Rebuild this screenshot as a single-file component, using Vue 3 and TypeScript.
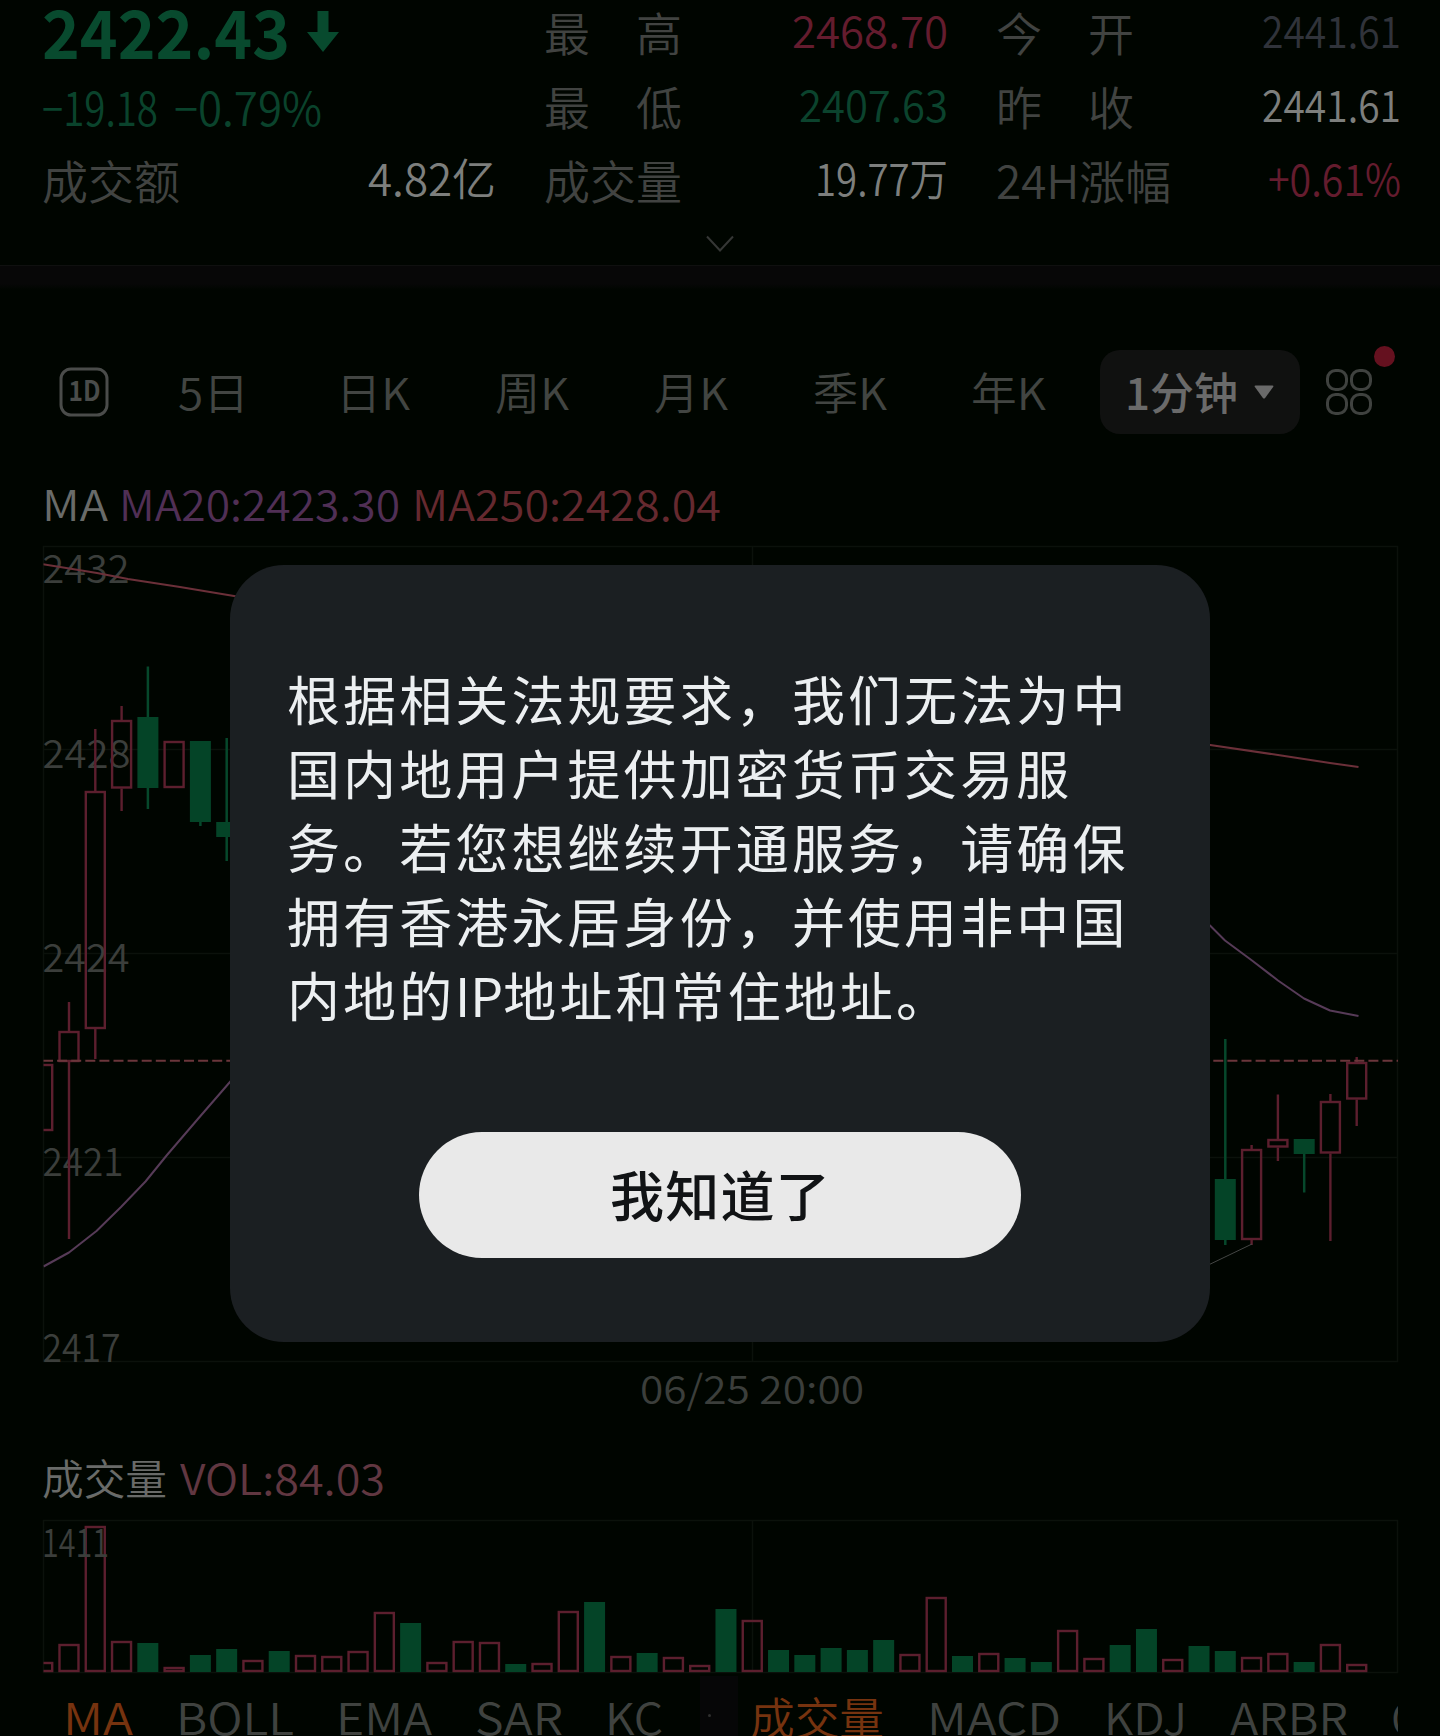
<script setup lang="ts">
interface Quote { label: string; value: string; labelWidth: number; width: number; tone: string }
interface Candle { x: number; open: number; close: number; high: number; low: number; up: boolean }
interface Tab { text: string; width: number; active?: boolean }

// Squeezes or stretches a label horizontally to a given advance width.
const vFit = {
  mounted(el: HTMLElement, binding: { value: number }) {
    const natural = el.getBoundingClientRect().width
    el.style.transformOrigin = 'left center'
    el.style.transform = `scaleX(${binding.value / natural})`
    el.style.marginRight = `${binding.value - natural}px`
  },
}

const high: Quote[] = [
  { label: '最　高', value: '2468.70', labelWidth: 138, width: 156, tone: 'red' },
  { label: '最　低', value: '2407.63', labelWidth: 138, width: 149, tone: 'green' },
  { label: '成交量', value: '19.77万', labelWidth: 138, width: 133, tone: 'light' },
]
const open: Quote[] = [
  { label: '今　开', value: '2441.61', labelWidth: 138, width: 139, tone: 'slate' },
  { label: '昨　收', value: '2441.61', labelWidth: 138, width: 139, tone: 'light' },
  { label: '24H涨幅', value: '+0.61%', labelWidth: 175, width: 133, tone: 'red' },
]

const periods: Tab[] = [
  { text: '5日', width: 71 },
  { text: '日K', width: 74 },
  { text: '周K', width: 74 },
  { text: '月K', width: 74 },
  { text: '季K', width: 74 },
  { text: '年K', width: 75 },
]

const gridRows = [546.5, 749.5, 953.5, 1157.5, 1361.5]
const axis = [
  { text: '2432', y: 582.5, width: 87 },
  { text: '2428', y: 767.5, width: 88 },
  { text: '2424', y: 971.5, width: 87 },
  { text: '2421', y: 1176, width: 81 },
  { text: '2417', y: 1362, width: 78 },
]

const candles: Candle[] = [
  { x: 42.7, open: 1131, close: 1064, high: 1064, low: 1131, up: true },
  { x: 69, open: 1062, close: 1031, high: 1002, low: 1239, up: true },
  { x: 95.3, open: 1029, close: 791, high: 729, low: 1059, up: true },
  { x: 121.6, open: 788.5, close: 720, high: 706, low: 811, up: true },
  { x: 147.9, open: 717, close: 788, high: 666.5, low: 809, up: false },
  { x: 174.1, open: 788, close: 741, high: 741, low: 788, up: true },
  { x: 200.4, open: 741, close: 822, high: 741, low: 826, up: false },
  { x: 226.7, open: 822, close: 837, high: 738, low: 861, up: false },
  { x: 1225.3, open: 1179, close: 1240, high: 1039, low: 1245, up: false },
  { x: 1251.6, open: 1240, close: 1149, high: 1145, low: 1245, up: true },
  { x: 1277.9, open: 1147.5, close: 1139, high: 1094.5, low: 1161, up: true },
  { x: 1304.2, open: 1139, close: 1154, high: 1139, low: 1192.5, up: false },
  { x: 1330.4, open: 1153.5, close: 1101, high: 1094, low: 1241, up: true },
  { x: 1356.7, open: 1099.5, close: 1062, high: 1057, low: 1126, up: true },
]

// Sign gives the direction of the bar, magnitude its height.
const volumes = [
  10, 28, 146, 31, -29, 5, -17, -23, 12, -21, 17, 16, 21, 60, -49, 10, 31, 30, -8, 9, 61, -70, 16, -19, 15, 7, -63,
  52, -22, -17, -24, -22, -32, 18, 75, -16, 19, -14, -10, 42, 14, -27, -43, 13, -26, -21, 15, 19, -10, 28, 8,
].map((v, i) => ({ x: 42.7 + i * 26.28, height: Math.abs(v), up: v > 0 }))

const mainIndicators: Tab[] = [
  { text: 'MA', width: 70, active: true },
  { text: 'BOLL', width: 118 },
  { text: 'EMA', width: 96 },
  { text: 'SAR', width: 88 },
  { text: 'KC', width: 58 },
]
const subIndicators: Tab[] = [
  { text: '成交量', width: 134, active: true },
  { text: 'MACD', width: 134 },
  { text: 'KDJ', width: 83 },
  { text: 'ARBR', width: 118 },
]

const lines = [
  '根据相关法规要求，我们无法为中',
  '国内地用户提供加密货币交易服',
  '务。若您想继续开通服务，请确保',
  '拥有香港永居身份，并使用非中国',
]
</script>

<template>
  <main class="screen">
    <section class="stats">
      <div class="col">
        <div class="row start">
          <span v-fit="248" class="price">2422.43</span>
          <svg class="arrow" width="34" height="42" viewBox="0 0 34 42">
            <path d="M11.5 0h11v21H33L17 41 1 21h10.5z" fill="#084a2e" />
          </svg>
        </div>
        <div class="row start">
          <span v-fit="116" class="change">−19.18</span>
          <span v-fit="148" class="change percent">−0.79%</span>
        </div>
        <div class="row">
          <span v-fit="138" class="label">成交额</span>
          <span v-fit="128" class="value light">4.82亿</span>
        </div>
      </div>
      <div v-for="(col, i) in [high, open]" :key="i" class="col">
        <div v-for="q in col" :key="q.label" class="row">
          <span v-fit="q.labelWidth" class="label">{{ q.label }}</span>
          <span v-fit="q.width" class="value" :class="q.tone">{{ q.value }}</span>
        </div>
      </div>
    </section>

    <div class="expander">
      <svg width="30" height="18" viewBox="0 0 30 18">
        <path d="M2 1.5 15 15.5 28 1.5" fill="none" stroke="#353735" stroke-width="2" />
      </svg>
    </div>
    <div class="band"></div>

    <nav class="periods">
      <svg class="day" width="50" height="50" viewBox="0 0 50 50">
        <rect x="2" y="2" width="46" height="46" rx="10" fill="none" stroke="#4a4c4a" stroke-width="3" />
        <text x="9.5" y="34" textLength="32" lengthAdjust="spacingAndGlyphs" class="day-text">1D</text>
      </svg>
      <div class="tabs">
        <div v-for="p in periods" :key="p.text" class="tab"><span v-fit="p.width">{{ p.text }}</span></div>
      </div>
      <div class="pill">
        <span v-fit="113">1分钟</span>
        <svg width="20" height="14" viewBox="0 0 20 14">
          <path d="M1.5.5h17q1.5 0 .6 1.4l-8 11q-1.1 1.4-2.2 0l-8-11Q0 .5 1.5.5z" fill="#6a6a6a" />
        </svg>
      </div>
      <div class="apps">
        <svg width="48" height="48" viewBox="0 0 48 48" fill="none" stroke="#3f423f" stroke-width="3">
          <rect x="2.5" y="2.5" width="19" height="19" rx="8" />
          <rect x="26.5" y="2.5" width="19" height="19" rx="8" />
          <rect x="2.5" y="26.5" width="19" height="19" rx="8" />
          <rect x="26.5" y="26.5" width="19" height="19" rx="8" />
        </svg>
        <i class="dot"></i>
      </div>
    </nav>

    <div class="legend ma">
      <span v-fit="66" class="name">MA</span>
      <span v-fit="281" class="purple">MA20:2423.30</span>
      <span v-fit="309" class="crimson">MA250:2428.04</span>
    </div>

    <svg class="chart" width="1440" height="910" viewBox="0 530 1440 910">
      <g class="grid">
        <path v-for="y in gridRows" :key="y" :d="`M43 ${y}H1398`" />
        <path d="M43.5 546V1362M752.5 546V1362M1397.5 546V1362" />
      </g>
      <g class="axis">
        <text v-for="a in axis" :key="a.text" x="42.5" :y="a.y" :textLength="a.width" lengthAdjust="spacingAndGlyphs">{{ a.text }}</text>
        <text x="640" y="1403.5" textLength="224" lengthAdjust="spacingAndGlyphs">06/25 20:00</text>
      </g>
      <clipPath id="plot"><rect x="43.5" y="540" width="1355" height="830" /></clipPath>
      <g clip-path="url(#plot)">
        <g v-for="c in candles" :key="c.x" :class="c.up ? 'up' : 'down'">
          <path :d="`M${c.x} ${c.high}V${Math.min(c.open, c.close)}M${c.x} ${Math.max(c.open, c.close)}V${c.low}`" />
          <rect
            :x="c.x - (c.up ? 9.5 : 10.5)"
            :y="Math.min(c.open, c.close) + (c.up ? 1 : 0)"
            :width="c.up ? 19 : 21"
            :height="Math.abs(c.open - c.close) - (c.up ? 2 : 0)"
          />
        </g>
        <path d="M43 1060.7H1398" class="last" />
        <path d="M43 564.3 97 573 128 579 180 587 240 597M1200 743.5 1278 755 1330 763 1358.5 767" class="ma250" />
        <path
          d="M43.5 1266.5 69 1252.5 96.5 1231 121 1207 145.5 1181.5 167 1155 197 1120 236 1075M1200 918 1210 925.5 1225 940.5 1252 960.5 1278 980.5 1304 998.5 1330 1010.5 1358.5 1016"
          class="ma20"
        />
        <path d="M1200 1269 1252 1244" class="tail" />
      </g>
    </svg>

    <div class="legend vol">
      <span v-fit="125" class="name">成交量</span>
      <span v-fit="205" class="rose">VOL:84.03</span>
    </div>

    <svg class="chart" width="1440" height="158" viewBox="0 1518 1440 158">
      <g class="grid">
        <path d="M43 1520.5H1398M43 1672.5H1398M43.5 1520V1673M752.5 1520V1673M1397.5 1520V1673" />
      </g>
      <clipPath id="bars"><rect x="43.5" y="1518" width="1355" height="158" /></clipPath>
      <g clip-path="url(#bars)">
        <rect
          v-for="b in volumes"
          :key="b.x"
          :class="b.up ? 'up' : 'down'"
          :x="b.x - (b.up ? 9.5 : 10.5)"
          :y="1672 - b.height + (b.up ? 1 : 0)"
          :width="b.up ? 19 : 21"
          :height="b.height - (b.up ? 2 : 0)"
        />
      </g>
      <g class="axis"><text x="42" y="1556.5" textLength="67" lengthAdjust="spacingAndGlyphs">1411</text></g>
    </svg>

    <nav class="indicators">
      <div class="group">
        <span v-for="t in mainIndicators" :key="t.text" v-fit="t.width" :class="{ active: t.active }">{{ t.text }}</span>
      </div>
      <div class="split"><i></i></div>
      <div class="group sub">
        <span v-for="t in subIndicators" :key="t.text" v-fit="t.width" :class="{ active: t.active }">{{ t.text }}</span>
        <span class="cut">CR</span>
      </div>
    </nav>

    <div class="dialog" role="dialog">
      <p class="message">
        <span v-for="l in lines" :key="l" class="line">{{ l }}</span>
        <span class="line">内地的<span v-fit="48" class="latin">IP</span>地址和常住地址。</span>
      </p>
      <button class="confirm" type="button">我知道了</button>
    </div>
  </main>
</template>

<style>
body {
  margin: 0;
  background: #000500;
}
</style>

<style scoped>
.screen {
  position: relative;
  width: 1440px;
  height: 1736px;
  overflow: hidden;
  background: #000500;
  font-family: 'Noto Sans CJK SC', sans-serif;
  font-weight: 350;
  font-size: 44px;
  color: #4a4c4a;
}
.screen span { white-space: pre; }
.screen svg { display: block; flex: none; }

.stats {
  display: grid;
  grid-template-columns: 454px 404px 405px;
  column-gap: 48px;
  padding-left: 42px;
  height: 212px;
}
.col { display: flex; flex-direction: column; gap: 10px; }
.row {
  display: flex;
  justify-content: space-between;
  align-items: center;
  height: 64px;
  line-height: 64px;
}
.row.start { justify-content: flex-start; }
.row span, .tab span, .pill span, .legend span, .group span { display: inline-block; }
.price { padding-bottom: 5px; font-size: 67px; font-weight: 700; color: #084a2e; }
.arrow { margin-left: 16px; }
.change { font-size: 46px; color: #0a432c; }
.percent { margin-left: 16px; }
.label { padding-bottom: 3px; font-size: 46px; color: #414341; }
.value { padding-bottom: 7px; font-size: 44px; }
.light { color: #7d7f7d; }
.slate { color: #30333a; }
.red { color: #641c2e; }
.green { color: #0b432d; }

.expander { display: flex; justify-content: center; height: 53px; box-sizing: border-box; padding-top: 23px; }
.band { height: 25px; box-sizing: border-box; border-top: 1px solid #0f100f; background: linear-gradient(#070707 75%, #000500); }

.periods { display: flex; align-items: center; height: 84px; margin-top: 60px; padding-left: 59px; }
.day-text { font-size: 28px; font-weight: 700; fill: #4a4c4a; }
.tabs { display: flex; width: 954px; margin-left: 25px; }
.tab { display: flex; justify-content: center; width: 159px; color: #424542; }
.tab span, .pill span { padding-bottom: 3px; }
.pill {
  display: flex;
  align-items: center;
  gap: 16px;
  width: 200px;
  height: 84px;
  box-sizing: border-box;
  padding-left: 25px;
  margin-left: 12px;
  border-radius: 20px;
  background: #101110;
  color: #6a6a6a;
  font-weight: 500;
}
.apps { position: relative; margin-left: 25px; }
.dot { position: absolute; left: 49px; top: -22px; width: 21px; height: 21px; border-radius: 50%; background: #65111f; }

.legend { display: flex; align-items: center; box-sizing: border-box; padding-left: 42px; font-size: 42px; }
.legend .name { color: #696b69; }
.ma { height: 96px; padding-top: 40px; }
.ma .purple { margin-left: 11px; color: #502f55; }
.ma .crimson { margin-left: 12px; color: #65292f; }
.vol { height: 78px; padding-bottom: 5px; }
.vol .rose { margin-left: 13px; color: #613741; }

.grid path { fill: none; stroke: #0b110b; stroke-width: 1.5; }
.axis text { font-size: 39.5px; fill: #3b3e3b; }
.up, .up path, .up rect { fill: none; stroke: #5c1f2e; stroke-width: 2.4; }
.down path { fill: none; stroke: #06482b; stroke-width: 2.5; }
.down, .down rect { fill: #044427; }
.last { fill: none; stroke: #6b363b; stroke-width: 2; stroke-dasharray: 10 4.1; }
.ma250 { fill: none; stroke: #6b3039; stroke-width: 2; }
.ma20 { fill: none; stroke: #563b57; stroke-width: 2; stroke-linejoin: round; }
.tail { fill: none; stroke: #444644; stroke-width: 1; }

.indicators { display: flex; height: 60px; line-height: 60px; padding-left: 63px; color: #3f423f; }
.group { display: flex; gap: 42.5px; padding-top: 10px; }
.group.sub { width: 648px; gap: 43px; margin-left: 12px; overflow: hidden; }
.group .active { color: #76330f; }
.split { display: flex; align-items: center; width: 38px; height: 60px; padding-top: 19px; margin-left: 37px; background: #060607; box-sizing: border-box; }
.split i { width: 3px; height: 3px; margin-left: 8px; border-radius: 50%; background: #303030; }

.dialog {
  position: absolute;
  left: 230px;
  top: 565px;
  width: 980px;
  height: 777px;
  box-sizing: border-box;
  padding: 96px 0 0 57px;
  border-radius: 54px;
  background: #1b1f22;
}
.message { margin: 0; font-size: 53px; font-weight: 400; letter-spacing: 3.1px; line-height: 74px; color: #eceff1; }
.line { display: block; }
.latin { display: inline-block; letter-spacing: 0; }
.confirm {
  display: block;
  width: 602px;
  height: 126px;
  margin: 101px 0 0 132px;
  padding: 0 0 4px 1px;
  border: 0;
  border-radius: 63px;
  background: #e9e9e9;
  color: #111315;
  font-family: inherit;
  font-size: 54px;
  font-weight: 500;
  letter-spacing: 1.2px;
}
</style>
